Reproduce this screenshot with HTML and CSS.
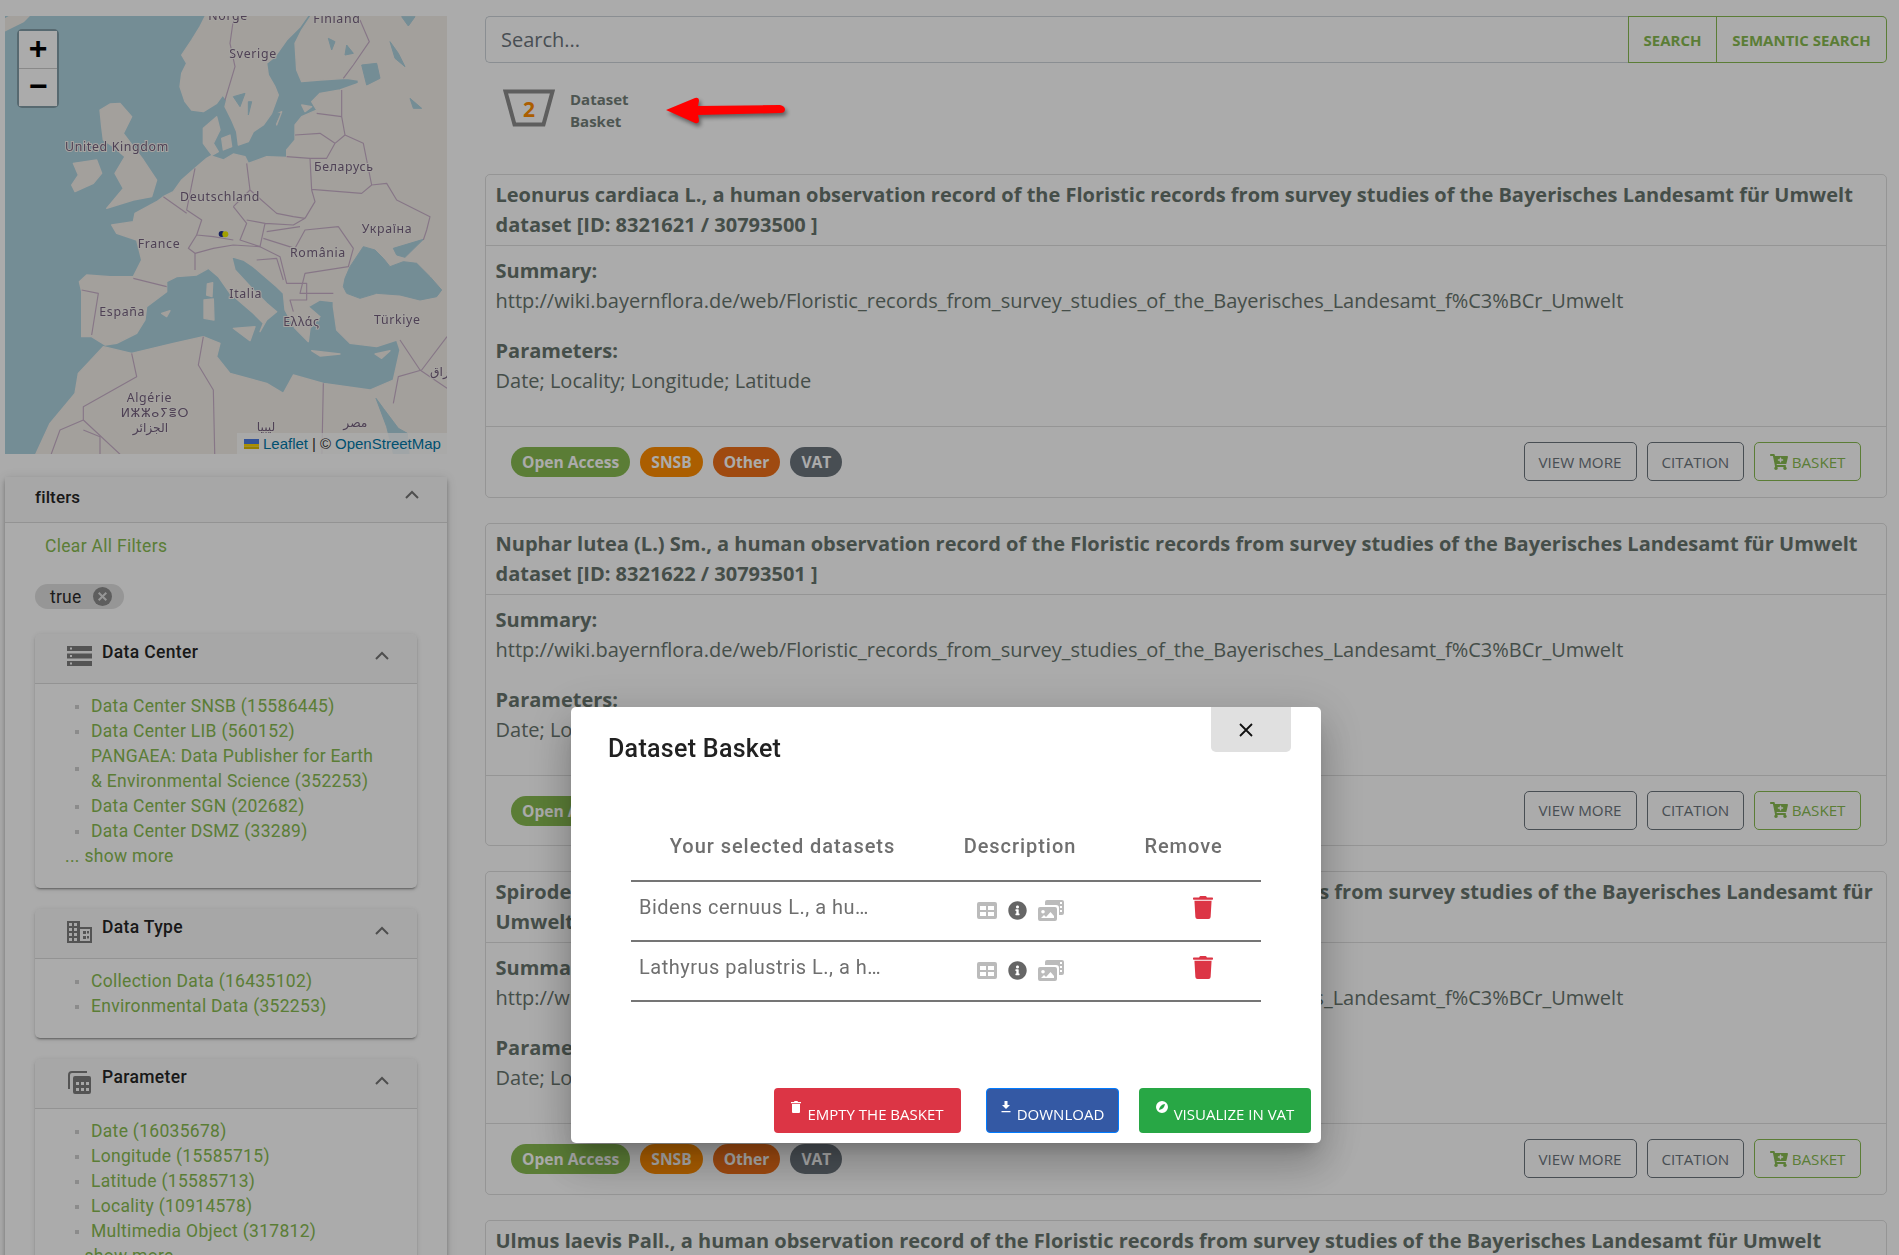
FILE: index.html
```html
<!DOCTYPE html>
<html lang="en">
<head>
<meta charset="utf-8">
<title>Dataset Basket</title>
<link rel="stylesheet" href="styles.css">
</head>
<body>
<div class="page">
  <aside class="sidebar">
    <div class="map">
      <svg class="map-art" viewBox="15 48 1326 1314" width="442" height="438" preserveAspectRatio="none">
        <rect class="water" x="15" y="48" width="1326" height="1314"/>
        <g class="map-soft">
          <g class="land">
            <path d="M-10 72 L60 30 H105 L70 65 L-10 105Z"/>
            <path d="M625 30 L600 80 L575 120 L545 165 L560 190 L545 220 L540 260 L555 305 L575 330 L610 335 L650 310 L668 285 L680 300 L675 320 L695 360 L710 395 L715 435 L745 425 L760 395 L790 375 L815 340 L835 285 L825 260 L805 225 L800 190 L825 170 L860 120 L900 80 L935 30Z"/>
            <path d="M945 30 L905 90 L885 130 L890 210 L905 245 L960 240 L1040 235 L1075 240 L1075 250 L1020 270 L960 280 L935 305 L950 330 L905 350 L885 375 L885 420 L860 450 L860 472 L800 470 L745 490 L735 470 L700 462 L670 480 L640 470 L628 455 L610 430 L610 385 L650 350 L660 390 L640 430 L655 455 L620 475 L585 505 L545 540 L520 575 L490 590 L470 605 L405 640 L400 665 L335 675 L350 700 L410 720 L425 780 L400 830 L330 830 L260 825 L238 845 L245 875 L245 1010 L275 1010 L315 1035 L350 1030 L410 1000 L435 960 L440 920 L500 875 L500 845 L530 830 L590 825 L625 805 L655 830 L690 880 L760 940 L790 970 L780 995 L800 960 L830 935 L800 910 L770 880 L705 810 L695 770 L730 780 L760 800 L830 860 L850 880 L855 930 L885 985 L925 1025 L930 985 L960 950 L925 920 L960 900 L1000 905 L1000 920 L1010 990 L1050 1030 L1130 1040 L1190 1020 L1200 1050 L1180 1140 L1110 1170 L970 1150 L880 1125 L850 1180 L800 1150 L690 1120 L650 1070 L660 1030 L610 1010 L520 1030 L395 1060 L310 1040 L235 1120 L225 1180 L150 1270 L90 1400 H1400 V30Z"/>
            <path d="M300 330 L330 312 L360 310 L395 350 L370 400 L400 440 L430 480 L470 540 L455 590 L400 600 L320 625 L370 565 L345 520 L375 470 L340 440 L310 420 L305 380Z"/>
            <path d="M220 490 L290 480 L305 520 L280 550 L225 575 L215 555 L235 525Z"/>
            <path d="M612 900 L640 897 L642 960 L612 955Z"/>
            <path d="M622 852 L638 848 L636 890 L620 885Z"/>
            <path d="M700 985 L765 980 L750 1022Z"/>
            <path d="M935 1052 L1020 1062 L960 1068Z"/>
            <path d="M1125 1062 L1170 1052 L1145 1075Z"/>
            <path d="M665 415 L690 405 L695 440 L670 450Z"/>
            <path d="M825 345 L845 335 L830 375Z"/>
            <path d="M905 315 L935 320 L915 335Z"/>
            <path d="M485 940 L510 932 L500 950Z"/>
          </g>
          <g class="water-inner">
            <path d="M1030 860 L1035 835 L1050 800 L1090 740 L1125 750 L1150 775 L1170 800 L1210 785 L1250 790 L1290 830 L1325 870 L1310 890 L1260 900 L1200 885 L1130 880 L1080 895 L1040 880Z"/>
            <path d="M1180 745 L1270 718 L1215 772 L1190 765Z"/>
            <path d="M1128 1195 L1150 1225 L1195 1285 L1222 1300 L1230 1400 L1190 1400 L1160 1280Z"/>
            <path d="M1085 195 L1130 190 L1140 235 L1100 255Z"/>
            <path d="M1170 125 L1195 160 L1215 200 L1185 175Z"/>
            <path d="M1230 295 L1265 325 L1240 325Z"/>
            <path d="M700 290 L735 280 L720 320Z"/>
            <path d="M745 305 L755 305 L745 345Z"/>
            <path d="M985 115 L1005 125 L995 150Z"/>
            <path d="M1040 135 L1060 160 L1035 165Z"/>
            <path d="M820 340 L840 340 L825 375Z"/>
            <path d="M1205 50 L1245 50 L1225 78Z"/>
          </g>
          <g class="borders">
            <path d="M700 60 L690 130 L705 200 L675 300"/>
            <path d="M1080 60 L1108 125 L1060 195 L1030 235"/>
            <path d="M1025 270 L1025 350 L1035 405 L1090 430 L1115 555 L1160 550 L1190 600 L1290 650 L1280 690 L1270 720"/>
            <path d="M950 340 L1025 350 M885 405 L960 400 L1005 430 L1035 405 M1005 430 L980 475 L930 475 L860 470"/>
            <path d="M930 475 L935 570 L945 605 L915 655 M935 568 L1085 580 L1115 555"/>
            <path d="M740 490 L750 570 L830 640 L880 650 L915 655"/>
            <path d="M585 505 L560 630 L605 660 L590 705 L640 710 L700 720"/>
            <path d="M490 590 L560 640 M700 620 L750 570 M700 620 L740 670 L720 720 L780 740 L795 670 L740 660 M795 670 L880 675 L915 655 M800 695 L900 680"/>
            <path d="M590 705 L565 745 L585 760 L640 745 L700 735 L780 740 L840 770 L860 850 L920 850 L920 900 L870 900 L880 935"/>
            <path d="M790 715 L885 745 L915 690 L1015 680 L1060 745 L1045 800 L915 820 L900 880 L1000 880"/>
            <path d="M770 780 L830 775 L850 840 M585 760 L585 810"/>
            <path d="M400 835 L500 860 M245 870 L295 880 L275 1005"/>
            <path d="M395 1060 L410 1130 L250 1220 L250 1260 L180 1290 L140 1400 M250 1260 L400 1400 M610 1010 L595 1095 L640 1170 L645 1400 M970 1150 L965 1400"/>
            <path d="M1200 1020 L1260 1110 L1341 1165 M1341 1010 L1265 1110 L1195 1130 L1180 1210 M250 1290 L300 1310 L300 1400"/>
          </g>
          <g class="map-labels">
            <text x="625" y="60">Norge</text>
            <text x="940" y="70">Finland</text>
            <text x="688" y="175">Sverige</text>
            <text x="195" y="453">United Kingdom</text>
            <text x="942" y="513">Беларусь</text>
            <text x="540" y="602">Deutschland</text>
            <text x="1085" y="698">Україна</text>
            <text x="413" y="743">France</text>
            <text x="870" y="771">România</text>
            <text x="688" y="895">Italia</text>
            <text x="298" y="948">España</text>
            <text x="850" y="978">Ελλάς</text>
            <text x="1122" y="971">Türkiye</text>
            <text x="380" y="1206">Algérie</text>
            <text x="362" y="1250">ⵍⵣⵣⴰⵢⴻⵔ</text>
            <text x="398" y="1296">الجزائر</text>
            <text x="770" y="1292">ليبيا</text>
            <text x="1030" y="1280">مصر</text>
            <text x="1290" y="1128">العراق</text>
          </g>
          <circle class="pin-a" cx="665" cy="702" r="9"/>
          <circle class="pin-b" cx="676" cy="703" r="9"/>
        </g>
      </svg>
      <div class="zoom-box">
        <span class="zoom-btn">+</span>
        <span class="zoom-btn">−</span>
      </div>
      <div class="attribution">
        <svg class="flag" viewBox="0 0 15 10" width="15" height="10"><rect width="15" height="5" fill="#4C7BE1"/><rect y="5" width="15" height="2.5" fill="#FFD500"/><rect y="7.5" width="15" height="2.5" fill="#E0BC00"/></svg>
        <span class="attr-link">Leaflet</span> <span>|</span> <span>©</span> <span class="attr-link">OpenStreetMap</span>
      </div>
    </div>

    <section class="filters">
      <header class="filters-head">
        <span class="filters-title">filters</span>
        <svg class="chev" viewBox="0 0 14 9" width="14" height="9"><path d="M1 8 L7 2 L13 8"/></svg>
      </header>
      <div class="filters-body">
        <a class="clear-link">Clear All Filters</a>
        <span class="chip">true
          <svg class="chip-x" viewBox="0 0 19 19" width="19" height="19"><circle cx="9.5" cy="9.5" r="9.5"/><path d="M5.7 5.7 L13.3 13.3 M13.3 5.7 L5.7 13.3"/></svg>
        </span>

        <div class="facet">
          <div class="facet-head">
            <svg class="facet-icon" viewBox="0 0 25 20" width="25" height="20"><path fill-rule="evenodd" d="M0 0h25v5H0zM3 1.5v2h2v-2zM0 7.500h25v5H0zM3 9v2h2V9zM0 15h25v5H0zM3 16.500v2h2v-2z"/></svg>
            <span class="facet-title">Data Center</span>
            <svg class="chev chev-sm" viewBox="0 0 14 9" width="14" height="9"><path d="M1 8 L7 2 L13 8"/></svg>
          </div>
          <ul class="facet-list">
            <li>Data Center SNSB (15586445)</li>
            <li>Data Center LIB (560152)</li>
            <li>PANGAEA: Data Publisher for Earth &amp; Environmental Science (352253)</li>
            <li>Data Center SGN (202682)</li>
            <li>Data Center DSMZ (33289)</li>
          </ul>
          <a class="show-more">... show more</a>
        </div>

        <div class="facet">
          <div class="facet-head">
            <svg class="facet-icon" viewBox="0 0 25 22" width="25" height="22"><path fill-rule="evenodd" d="M0 0h13v6h12v16H0zM2 2v3h3V2zM7 2v3h3V2zM2 7v3h3V7zM7 7v3h3V7zM2 12v3h3v-3zM7 12v3h3v-3zM2 17v3h3v-3zM7 17v3h3v-3zM13 8v12h10V8zM16 10h3v3h-3zM16 15h3v3h-3z"/><rect x="20" y="10" width="2" height="2.500"/><rect x="20" y="15" width="2" height="2.500"/></svg>
            <span class="facet-title">Data Type</span>
            <svg class="chev chev-sm" viewBox="0 0 14 9" width="14" height="9"><path d="M1 8 L7 2 L13 8"/></svg>
          </div>
          <ul class="facet-list">
            <li>Collection Data (16435102)</li>
            <li>Environmental Data (352253)</li>
          </ul>
        </div>

        <div class="facet">
          <div class="facet-head">
            <svg class="facet-icon facet-icon-calc" viewBox="0 0 23 23" width="23" height="23"><path fill="none" stroke="currentColor" stroke-width="2" d="M19 1H4a3 3 0 0 0-3 3v14"/><path fill-rule="evenodd" d="M7 5h14a2 2 0 0 1 2 2v14a2 2 0 0 1-2 2H7a2 2 0 0 1-2-2V7a2 2 0 0 1 2-2zM8 11v3h3v-3zM13 11v3h3v-3zM18 11v3h3v-3zM8 17v3h3v-3zM13 17v3h3v-3zM18 17v3h3v-3z"/></svg>
            <span class="facet-title">Parameter</span>
            <svg class="chev chev-sm" viewBox="0 0 14 9" width="14" height="9"><path d="M1 8 L7 2 L13 8"/></svg>
          </div>
          <ul class="facet-list">
            <li>Date (16035678)</li>
            <li>Longitude (15585715)</li>
            <li>Latitude (15585713)</li>
            <li>Locality (10914578)</li>
            <li>Multimedia Object (317812)</li>
          </ul>
          <a class="show-more">... show more</a>
        </div>
      </div>
    </section>
  </aside>

  <main class="content">
    <div class="search-row">
      <div class="search-input">Search...</div>
      <button class="search-btn">Search</button>
      <button class="search-btn search-btn-last">Semantic Search</button>
    </div>

    <div class="basket-row">
      <svg class="basket-icon" viewBox="0 0 52 38" width="52" height="38">
        <path d="M2.500 2.500 H49.500 L40.500 35.500 H11.500 Z"/>
        <text x="26" y="27.500">2</text>
      </svg>
      <div class="basket-label">Dataset<br>Basket</div>
    </div>

    <article class="card">
      <h2 class="card-title">Leonurus cardiaca L., a human observation record of the Floristic records from survey studies of the Bayerisches Landesamt für Umwelt dataset [ID: 8321621 / 30793500 ]</h2>
      <div class="card-body">
        <p><strong>Summary:</strong><br>http://wiki.bayernflora.de/web/Floristic_records_from_survey_studies_of_the_Bayerisches_Landesamt_f%C3%BCr_Umwelt</p>
        <p><strong>Parameters:</strong><br>Date; Locality; Longitude; Latitude</p>
      </div>
      <div class="card-foot">
        <div class="badges"><span class="badge badge-green">Open Access</span><span class="badge badge-orange">SNSB</span><span class="badge badge-red">Other</span><span class="badge badge-grey">VAT</span></div>
        <div class="actions">
          <button class="act">View More</button><button class="act">Citation</button>
          <button class="act act-green"><svg class="cart" viewBox="0 0 576 512" width="18" height="16"><path d="M504.700 320H211.600l6.500 32h268.400c15.400 0 26.800 14.300 23.400 29.300l-5.500 24.300C523.100 414.700 536 433.800 536 456c0 31.200-25.500 56.600-56.700 56-29.700-.6-54.100-25.100-55-54.800-.5-16.200 6-30.900 16.700-41.200H231c10.400 10.200 16.800 24.300 16.800 40 0 31.800-26.500 57.400-58.700 55.900-28.600-1.300-51.800-24.400-53.300-53-1.200-22.100 10.400-41.500 28-51.600L93.900 64H24C10.700 64 0 53.300 0 40V24C0 10.700 10.700 0 24 0h102.500c11.400 0 21.200 8 23.500 19.200L159.200 64H551c15.400 0 26.800 14.300 23.400 29.300l-47.300 208C524.600 312.200 515.300 320 504.700 320zM408 168h-48v-40c0-8.800-7.200-16-16-16h-16c-8.800 0-16 7.200-16 16v40h-48c-8.800 0-16 7.200-16 16v16c0 8.800 7.200 16 16 16h48v40c0 8.800 7.200 16 16 16h16c8.800 0 16-7.200 16-16v-40h48c8.800 0 16-7.200 16-16v-16c0-8.800-7.200-16-16-16z"/></svg>Basket</button>
        </div>
      </div>
    </article>

    <article class="card">
      <h2 class="card-title">Nuphar lutea (L.) Sm., a human observation record of the Floristic records from survey studies of the Bayerisches Landesamt für Umwelt dataset [ID: 8321622 / 30793501 ]</h2>
      <div class="card-body">
        <p><strong>Summary:</strong><br>http://wiki.bayernflora.de/web/Floristic_records_from_survey_studies_of_the_Bayerisches_Landesamt_f%C3%BCr_Umwelt</p>
        <p><strong>Parameters:</strong><br>Date; Locality; Longitude; Latitude</p>
      </div>
      <div class="card-foot">
        <div class="badges"><span class="badge badge-green">Open Access</span><span class="badge badge-orange">SNSB</span><span class="badge badge-red">Other</span><span class="badge badge-grey">VAT</span></div>
        <div class="actions">
          <button class="act">View More</button><button class="act">Citation</button>
          <button class="act act-green"><svg class="cart" viewBox="0 0 576 512" width="18" height="16"><path d="M504.700 320H211.600l6.500 32h268.400c15.400 0 26.800 14.300 23.400 29.300l-5.500 24.300C523.100 414.700 536 433.800 536 456c0 31.200-25.500 56.600-56.700 56-29.700-.6-54.100-25.100-55-54.800-.5-16.200 6-30.900 16.700-41.200H231c10.400 10.200 16.800 24.300 16.800 40 0 31.800-26.500 57.400-58.700 55.900-28.600-1.300-51.800-24.400-53.300-53-1.200-22.100 10.400-41.500 28-51.600L93.900 64H24C10.700 64 0 53.300 0 40V24C0 10.700 10.700 0 24 0h102.500c11.400 0 21.200 8 23.500 19.200L159.200 64H551c15.400 0 26.800 14.300 23.400 29.300l-47.300 208C524.600 312.200 515.300 320 504.700 320zM408 168h-48v-40c0-8.800-7.200-16-16-16h-16c-8.800 0-16 7.200-16 16v40h-48c-8.800 0-16 7.200-16 16v16c0 8.800 7.200 16 16 16h48v40c0 8.800 7.200 16 16 16h16c8.800 0 16-7.200 16-16v-40h48c8.800 0 16-7.200 16-16v-16c0-8.800-7.200-16-16-16z"/></svg>Basket</button>
        </div>
      </div>
    </article>

    <article class="card">
      <h2 class="card-title">Spirodela polyrhiza (L.) Schleid., a human observation record of the Floristic records from survey studies of the Bayerisches Landesamt für Umwelt dataset [ID: 8321623 / 30793502 ]</h2>
      <div class="card-body">
        <p><strong>Summary:</strong><br>http://wiki.bayernflora.de/web/Floristic_records_from_survey_studies_of_the_Bayerisches_Landesamt_f%C3%BCr_Umwelt</p>
        <p><strong>Parameters:</strong><br>Date; Locality; Longitude; Latitude</p>
      </div>
      <div class="card-foot">
        <div class="badges"><span class="badge badge-green">Open Access</span><span class="badge badge-orange">SNSB</span><span class="badge badge-red">Other</span><span class="badge badge-grey">VAT</span></div>
        <div class="actions">
          <button class="act">View More</button><button class="act">Citation</button>
          <button class="act act-green"><svg class="cart" viewBox="0 0 576 512" width="18" height="16"><path d="M504.700 320H211.600l6.500 32h268.400c15.400 0 26.800 14.300 23.400 29.300l-5.500 24.300C523.100 414.700 536 433.800 536 456c0 31.200-25.500 56.600-56.700 56-29.700-.6-54.100-25.100-55-54.800-.5-16.200 6-30.900 16.700-41.200H231c10.400 10.200 16.800 24.300 16.800 40 0 31.800-26.500 57.400-58.700 55.900-28.600-1.300-51.800-24.400-53.300-53-1.200-22.100 10.400-41.500 28-51.600L93.900 64H24C10.700 64 0 53.300 0 40V24C0 10.700 10.700 0 24 0h102.500c11.400 0 21.200 8 23.500 19.200L159.200 64H551c15.400 0 26.800 14.300 23.400 29.300l-47.300 208C524.600 312.200 515.300 320 504.700 320zM408 168h-48v-40c0-8.800-7.200-16-16-16h-16c-8.800 0-16 7.200-16 16v40h-48c-8.800 0-16 7.200-16 16v16c0 8.800 7.200 16 16 16h48v40c0 8.800 7.200 16 16 16h16c8.800 0 16-7.200 16-16v-40h48c8.800 0 16-7.200 16-16v-16c0-8.800-7.200-16-16-16z"/></svg>Basket</button>
        </div>
      </div>
    </article>

    <article class="card">
      <h2 class="card-title">Ulmus laevis Pall., a human observation record of the Floristic records from survey studies of the Bayerisches Landesamt für Umwelt dataset [ID: 8321624 / 30793503 ]</h2>
    </article>
  </main>
</div>

<div class="backdrop"></div>

<div class="dialog" role="dialog">
  <button class="dialog-close" aria-label="Close"><svg viewBox="0 0 14 14" width="14" height="14"><path d="M1 1 L13 13 M13 1 L1 13"/></svg></button>
  <h1 class="dialog-title">Dataset Basket</h1>
  <table class="basket-table">
    <colgroup><col class="col-a"><col class="col-b"><col class="col-c"></colgroup>
    <thead><tr><th>Your selected datasets</th><th>Description</th><th>Remove</th></tr></thead>
    <tbody>
      <tr>
        <td class="name-cell">Bidens cernuus L., a hu…</td>
        <td class="icons-cell">
          <svg class="i-table" viewBox="0 0 20 17" width="20" height="17"><path fill-rule="evenodd" d="M2 0h16a2 2 0 0 1 2 2v13a2 2 0 0 1-2 2H2a2 2 0 0 1-2-2V2a2 2 0 0 1 2-2zM3 4v4h6V4zM11 4v4h6V4zM3 10v4h6v-4zM11 10v4h6v-4z"/></svg>
          <svg class="i-info" viewBox="0 0 512 512" width="19" height="19"><path d="M256 8C119 8 8 119.100 8 256c0 137 111 248 248 248s248-111 248-248C504 119.100 393 8 256 8zm0 110c23.200 0 42 18.800 42 42s-18.800 42-42 42-42-18.800-42-42 18.800-42 42-42zm56 254c0 6.600-5.400 12-12 12h-88c-6.600 0-12-5.400-12-12v-24c0-6.600 5.400-12 12-12h12v-64h-12c-6.600 0-12-5.400-12-12v-24c0-6.600 5.400-12 12-12h64c6.600 0 12 5.400 12 12v100h12c6.600 0 12 5.400 12 12v24z"/></svg>
          <svg class="i-media" viewBox="0 0 26 21" width="26" height="21"><path fill-rule="evenodd" d="M7 2a2 2 0 0 1 2-2h15a2 2 0 0 1 2 2v11a2 2 0 0 1-2 2h-3V8a3 3 0 0 0-3-3H7zM22 2v2h2V2zM22 6v2h2V6zM22 10v2h2v-2z"/><path fill-rule="evenodd" d="M2 7h15a2 2 0 0 1 2 2v10a2 2 0 0 1-2 2H2a2 2 0 0 1-2-2V9a2 2 0 0 1 2-2zM5 10a1.800 1.800 0 1 0 0 3.600 1.800 1.800 0 0 0 0-3.600zM3 18h13v-2l-3.500-4-4.500 5-2-2z"/></svg>
        </td>
        <td class="trash-cell"><svg class="i-trash" viewBox="0 0 448 512" width="20" height="23"><path d="M432 32H312l-9.400-18.700A24 24 0 0 0 281.100 0H166.800a23.720 23.720 0 0 0-21.400 13.300L136 32H16A16 16 0 0 0 0 48v16a16 16 0 0 0 16 16h416a16 16 0 0 0 16-16V48a16 16 0 0 0-16-16zM53.200 467a48 48 0 0 0 47.900 45h245.800a48 48 0 0 0 47.900-45L416 104H32z"/></svg></td>
      </tr>
      <tr>
        <td class="name-cell">Lathyrus palustris L., a h…</td>
        <td class="icons-cell">
          <svg class="i-table" viewBox="0 0 20 17" width="20" height="17"><path fill-rule="evenodd" d="M2 0h16a2 2 0 0 1 2 2v13a2 2 0 0 1-2 2H2a2 2 0 0 1-2-2V2a2 2 0 0 1 2-2zM3 4v4h6V4zM11 4v4h6V4zM3 10v4h6v-4zM11 10v4h6v-4z"/></svg>
          <svg class="i-info" viewBox="0 0 512 512" width="19" height="19"><path d="M256 8C119 8 8 119.100 8 256c0 137 111 248 248 248s248-111 248-248C504 119.100 393 8 256 8zm0 110c23.200 0 42 18.800 42 42s-18.800 42-42 42-42-18.800-42-42 18.800-42 42-42zm56 254c0 6.600-5.400 12-12 12h-88c-6.600 0-12-5.400-12-12v-24c0-6.600 5.400-12 12-12h12v-64h-12c-6.600 0-12-5.400-12-12v-24c0-6.600 5.400-12 12-12h64c6.600 0 12 5.400 12 12v100h12c6.600 0 12 5.400 12 12v24z"/></svg>
          <svg class="i-media" viewBox="0 0 26 21" width="26" height="21"><path fill-rule="evenodd" d="M7 2a2 2 0 0 1 2-2h15a2 2 0 0 1 2 2v11a2 2 0 0 1-2 2h-3V8a3 3 0 0 0-3-3H7zM22 2v2h2V2zM22 6v2h2V6zM22 10v2h2v-2z"/><path fill-rule="evenodd" d="M2 7h15a2 2 0 0 1 2 2v10a2 2 0 0 1-2 2H2a2 2 0 0 1-2-2V9a2 2 0 0 1 2-2zM5 10a1.800 1.800 0 1 0 0 3.600 1.800 1.800 0 0 0 0-3.600zM3 18h13v-2l-3.500-4-4.500 5-2-2z"/></svg>
        </td>
        <td class="trash-cell"><svg class="i-trash" viewBox="0 0 448 512" width="20" height="23"><path d="M432 32H312l-9.400-18.700A24 24 0 0 0 281.100 0H166.800a23.720 23.720 0 0 0-21.400 13.300L136 32H16A16 16 0 0 0 0 48v16a16 16 0 0 0 16 16h416a16 16 0 0 0 16-16V48a16 16 0 0 0-16-16zM53.200 467a48 48 0 0 0 47.900 45h245.800a48 48 0 0 0 47.900-45L416 104H32z"/></svg></td>
      </tr>
    </tbody>
  </table>
  <div class="dialog-foot">
    <button class="dlg-btn dlg-red"><svg class="dlg-ico" viewBox="0 0 10 12" width="10" height="12"><path d="M0 1h3l.5-1h3L7 1h3v1.200H0zM1 3h8v8a1 1 0 0 1-1 1H2a1 1 0 0 1-1-1z"/></svg>Empty the basket</button>
    <button class="dlg-btn dlg-blue"><svg class="dlg-ico" viewBox="0 0 10 12" width="10" height="12"><path d="M3.500 0h3v4H9L5 8 1 4h2.500zM0.500 10h9v1.200h-9z"/></svg>Download</button>
    <button class="dlg-btn dlg-green"><svg class="dlg-ico dlg-ico-round" viewBox="0 0 12 12" width="12" height="12"><path fill-rule="evenodd" d="M6 0a6 6 0 1 1 0 12A6 6 0 0 1 6 0zM9 3C6 3.500 3.800 5 3 9c3.500-.5 5.500-2.500 6-6z"/></svg>Visualize in VAT</button>
  </div>
</div>

<svg class="red-arrow" viewBox="0 0 125 34" width="125" height="34">
  <path d="M1 14 L30 2 Q34 1 34 5 L33 10 L115 9 Q120 10 120 13.500 Q120 17 115 17 L33 19 L34 24 Q34 28 30 27 Z"/>
</svg>
</body>
</html>
```
FILE: styles.css
```css
* { box-sizing: border-box; }
html, body { margin: 0; height: 1255px; overflow: hidden; background: #fff; }
body { font-family: "Open Sans", sans-serif; color: #68756e; position: relative; }

.page { display: flex; align-items: flex-start; padding: 16px 12px 0 5px; gap: 38px; height: 1255px; overflow: hidden; }

/* sidebar */
.sidebar { width: 442px; flex: none; font-family: Roboto, sans-serif; }
.map { position: relative; width: 442px; height: 438px; overflow: hidden; }
.map-art { display: block; }
.map-soft { filter: blur(.4px); }
.water { fill: #aed2df; }
.land path { fill: #f3efe9; stroke: #f3efe9; stroke-width: 4; stroke-linejoin: round; }
.water-inner path { fill: #aed2df; stroke: #aed2df; stroke-width: 3; stroke-linejoin: round; }
.borders path { fill: none; stroke: #c9b1c9; stroke-width: 3.5; stroke-linejoin: round; }
.map-labels text { font-family: "Noto Sans", "DejaVu Sans", sans-serif; font-size: 37px; fill: #76627f; letter-spacing: 2px; paint-order: stroke; stroke: #f6f3ee; stroke-width: 6px; }
.pin-a { fill: #1f2f8c; }
.pin-b { fill: #f0ee00; }
.zoom-box { position: absolute; left: 12px; top: 13px; width: 42px; border: 2px solid rgba(0,0,0,.25); border-radius: 5px; display: flex; flex-direction: column; background-clip: padding-box; }
.zoom-btn { height: 37px; padding-top: 3px; background: #fff; display: flex; align-items: center; justify-content: center; font: 700 32px/1 "Liberation Mono", monospace; color: #000; }
.zoom-btn + .zoom-btn { border-top: 1px solid #ccc; height: 38px; }
.attribution { position: absolute; right: 0; bottom: 0; width: 210px; height: 21px; background: rgba(255,255,255,.8); padding-left: 7px; display: flex; align-items: center; gap: 4px; font: 15px/21px "Liberation Sans", sans-serif; color: #333; white-space: nowrap; }
.attr-link { color: #0078a8; }

.filters { margin-top: 23px; width: 442px; box-shadow: 0 2px 4px -1px rgba(0,0,0,.2), 0 4px 5px rgba(0,0,0,.14), 0 1px 10px rgba(0,0,0,.12); }
.filters-head { height: 46px; padding: 10px 28px 0 30px; display: flex; justify-content: space-between; align-items: flex-start; background: rgba(0,0,0,.02); border-bottom: 1px solid rgba(0,0,0,.12); }
.filters-title { font-size: 17px; font-weight: 500; line-height: 20px; letter-spacing: .15px; color: #262626; }
.chev { fill: none; stroke: #757575; stroke-width: 2; margin-top: 3px; }
.filters-body { padding: 11px 30px 0; }
.clear-link { display: block; margin-left: 10px; font-size: 17.500px; line-height: 25px; letter-spacing: .3px; color: #88bb51; }
.chip { margin-top: 25px; width: 89px; height: 25px; border-radius: 13px; background: #e0e0e0; display: flex; align-items: center; padding-left: 15px; font-size: 17.500px; letter-spacing: .2px; color: #2b2b2b; gap: 12px; }
.chip-x circle { fill: #8c8c8c; }
.chip-x path { stroke: #e0e0e0; stroke-width: 2; }

.facet { width: 382px; padding-bottom: 19px; border-radius: 5px; box-shadow: 0 3px 1px -2px rgba(0,0,0,.2), 0 2px 2px rgba(0,0,0,.14), 0 1px 5px rgba(0,0,0,.12); }
.chip + .facet { margin-top: 25px; }
.facet + .facet { margin-top: 21px; }
.facet-head { height: 50px; display: flex; align-items: flex-start; padding: 8px 28px 0 32px; background: rgba(0,0,0,.02); border-bottom: 1px solid rgba(0,0,0,.12); border-radius: 5px 5px 0 0; color: #7e7e7e; }
.facet-icon { fill: currentColor; margin-top: 4px; flex: none; }
.facet-icon-calc { margin: 4px 1px 0; }
.facet-title { margin-left: 10px; font-size: 17.500px; font-weight: 500; line-height: 20px; letter-spacing: .35px; color: #262626; }
.chev-sm { margin-left: auto; margin-top: 9px; }
.facet-list { list-style: none; margin: 0; padding: 10px 0 0 56px; width: 350px; font-size: 17.500px; line-height: 25px; letter-spacing: .3px; color: #88bb51; }
.facet-list li { position: relative; }
.facet-list li::before { content: ""; position: absolute; left: -16px; top: 50%; margin-top: -2px; width: 4px; height: 4px; background: #d0d0d0; }
.show-more { display: block; margin-left: 30px; font-size: 17.500px; line-height: 25px; letter-spacing: .3px; color: #88bb51; }

/* main */
.content { flex: 1; min-width: 0; }
.search-row { display: flex; height: 47px; }
.search-input { flex: 1; border: 1px solid #ced4da; border-right: 0; border-radius: 5px 0 0 5px; padding: 0 15px; font-size: 20px; line-height: 45px; color: #6c757d; }
.search-btn { width: 89px; border: 1px solid #88bb51; background: none; font: 700 15px "Open Sans", sans-serif; text-transform: uppercase; color: #88bb51; padding: 0; }
.search-btn-last { width: 170px; border-left: 0; border-radius: 0 5px 5px 0; }
.basket-row { height: 111px; display: flex; padding: 26px 0 0 18px; }
.basket-icon { flex: none; }
.basket-icon path { fill: none; stroke: #8c8c8c; stroke-width: 4; }
.basket-icon text { font: 700 21px "Open Sans", sans-serif; fill: #ff8c00; text-anchor: middle; }
.basket-label { margin: -1px 0 0 15px; font-size: 15px; font-weight: 700; line-height: 22px; color: #747f79; }

.card { border: 1px solid rgba(0,0,0,.125); border-radius: 5px; margin-bottom: 25px; height: 323.500px; }
.card-title { margin: 0; height: 71px; padding: 5px 9.500px 0; font-size: 20px; font-weight: 700; line-height: 30px; border-bottom: 1px solid rgba(0,0,0,.125); color: #68756e; }
.card-body { height: 180px; padding: 10px 9.500px 0; font-size: 20px; line-height: 30px; }
.card-body p { margin: 0 0 20px; }
.card-body strong { font-weight: 700; }
.card-foot { height: 70px; border-top: 1px solid rgba(0,0,0,.125); padding: 15px 25px 0 25px; display: flex; justify-content: space-between; align-items: flex-start; }
.badges { display: flex; gap: 10px; padding-top: 5px; }
.badge { height: 30px; padding: 0 11px; border-radius: 15px; font-size: 15.600px; font-weight: 700; line-height: 30px; color: #fff; }
.badge-green { background: #88bb51; }
.badge-orange { background: #ff8c00; }
.badge-red { background: #ee6f18; }
.badge-grey { background: #6c757d; }
.actions { display: flex; gap: 10px; }
.act { height: 39px; padding: 0 14px; border: 1px solid #6c757d; border-radius: 5px; background: none; font: 400 15.200px "Open Sans", sans-serif; text-transform: uppercase; color: #6c757d; display: flex; align-items: center; }
.act-green { border-color: #88bb51; color: #88bb51; padding: 0 14.500px; }
.cart { fill: currentColor; margin-right: 4px; }

/* overlay + dialog */
.backdrop { position: fixed; inset: 0; background: rgba(0,0,0,.33); }
.dialog { position: fixed; left: 571px; top: 707px; width: 750px; height: 436px; background: #fff; border-radius: 5px; box-shadow: 0 11px 15px -7px rgba(0,0,0,.2), 0 24px 38px 3px rgba(0,0,0,.14), 0 9px 46px 8px rgba(0,0,0,.12); display: flex; flex-direction: column; font-family: Roboto, sans-serif; }
.dialog-close { position: absolute; left: 640px; top: 0; width: 80px; height: 45px; border: 0; border-radius: 0 0 5px 5px; background: #e0e0e0; display: flex; align-items: center; justify-content: center; padding: 0; }
.dialog-close svg { stroke: #111; stroke-width: 1.800; margin-right: 10px; }
.dialog-title { margin: 27px 0 0 37px; font-size: 25px; font-weight: 500; line-height: 30px; letter-spacing: .3px; color: #212121; }
.basket-table { margin: 46px 0 0 60px; width: 630px; border-collapse: collapse; table-layout: fixed; color: #6f6f6f; }
.col-a { width: 303px; }
.col-b { width: 172px; }
.col-c { width: 155px; }
.basket-table th { height: 71px; padding: 2px 0 0; font-size: 20px; font-weight: 500; letter-spacing: .95px; text-align: center; border-bottom: 2px solid #757575; }
.basket-table td { height: 60px; padding: 0; border-bottom: 2px solid #757575; vertical-align: top; }
.name-cell { padding: 13px 0 0 8px !important; font-size: 20px; line-height: 24px; letter-spacing: .5px; }
.icons-cell { text-align: center; padding-top: 18px !important; white-space: nowrap; font-size: 0; }
.icons-cell svg { vertical-align: middle; }
.i-table { fill: #bbb; }
.i-info { fill: #666; margin: 0 11px; }
.i-media { fill: #bbb; }
.trash-cell { padding: 14px 0 0 87px !important; }
.i-trash { fill: #dc3545; display: block; }
.dialog-foot { margin-top: auto; padding: 0 10px 10px 0; display: flex; justify-content: flex-end; gap: 20px; }
.dlg-btn { height: 45px; border: 1px solid transparent; border-radius: 4px; font: 400 15px "Open Sans", sans-serif; text-transform: uppercase; color: #fff; display: flex; align-items: center; justify-content: center; padding: 6px 0 0; }
.dlg-ico { fill: #fff; margin: -14px 6px 0 0; }
.dlg-red { background: #dc3545; width: 187px; margin-right: 5px; }
.dlg-blue { background: #3459a4; border-color: #007bff; width: 133px; }
.dlg-green { background: #28a745; width: 172px; }

.red-arrow { position: fixed; left: 665px; top: 96px; overflow: visible; filter: drop-shadow(2px 3px 2px rgba(0,0,0,.45)); }
.red-arrow path { fill: #f00; }
```
